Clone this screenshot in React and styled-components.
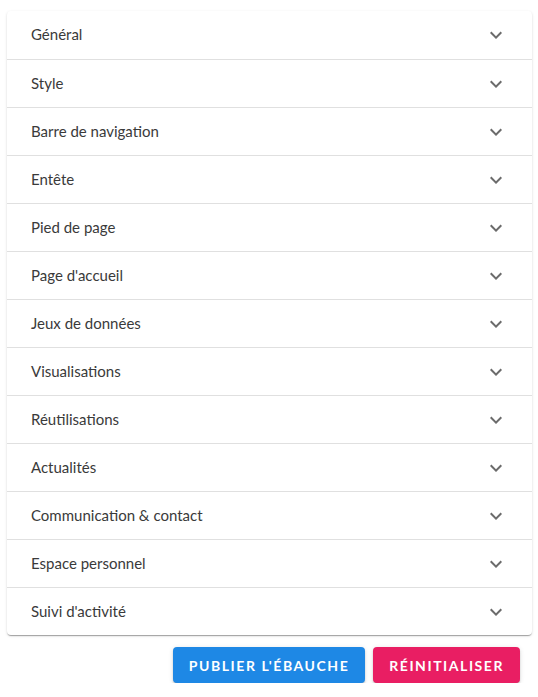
import styled, { createGlobalStyle } from "styled-components"

const GlobalStyle = createGlobalStyle`
    body {
        margin: 0;
        background: #ffffff;
        font-family: "Lato", "Noto Sans", sans-serif;
    }
`

const Page = styled.div`
    display: flex;
    flex-direction: column;
    width: 525px;
    padding: 11px 6px 0 7px;
`

const Card = styled.div`
    display: flex;
    flex-direction: column;
    background: #ffffff;
    border-radius: 4px;
    box-shadow: 0px 2px 1px -1px rgba(0,0,0,0.2), 0px 1px 1px 0px rgba(0,0,0,0.14), 0px 1px 3px 0px rgba(0,0,0,0.12);
`

const Row = styled.div`
    display: flex;
    align-items: center;
    justify-content: space-between;
    height: 48px;
    padding: 0 24px 2px;
    border-top: ${({ $first }) => ($first ? "none" : "1px solid #e0e0e0")};
    box-sizing: border-box;
    color: #3a3a3a;
    font-size: 15px;
`

const Chevron = styled.svg`
    width: 24px;
    height: 24px;
    margin-top: 2px;
    fill: #6b6b6b;
`

const Actions = styled.div`
    display: flex;
    justify-content: flex-end;
    gap: 8px;
    padding: 12px 12px 0 0;
`

const Button = styled.button`
    height: 36px;
    padding: 0 16px;
    border: none;
    border-radius: 4px;
    background: ${({ $color }) => $color};
    color: #ffffff;
    font-family: "Lato", "Noto Sans", sans-serif;
    font-weight: 700;
    font-size: 14px;
    letter-spacing: 1.55px;
    text-transform: uppercase;
    box-shadow: 0px 3px 1px -2px rgba(0,0,0,0.2), 0px 2px 2px 0px rgba(0,0,0,0.14), 0px 1px 5px 0px rgba(0,0,0,0.12);
`

const sections = [
    "Général",
    "Style",
    "Barre de navigation",
    "Entête",
    "Pied de page",
    "Page d'accueil",
    "Jeux de données",
    "Visualisations",
    "Réutilisations",
    "Actualités",
    "Communication & contact",
    "Espace personnel",
    "Suivi d'activité",
]

const App = () => {
    return (
        <>
            <GlobalStyle />
            <Page>
                <Card>
                    {sections.map((title, i) => (
                        <Row key={title} $first={i === 0}>
                            {title}
                            <Chevron viewBox="0 0 24 24">
                                <path d="M16.59 8.59 12 13.17 7.41 8.59 6 10l6 6 6-6z" />
                            </Chevron>
                        </Row>
                    ))}
                </Card>
                <Actions>
                    <Button $color="#1e88e5">Publier l'ébauche</Button>
                    <Button $color="#e91e63">Réinitialiser</Button>
                </Actions>
            </Page>
        </>
    )
}

export default App
